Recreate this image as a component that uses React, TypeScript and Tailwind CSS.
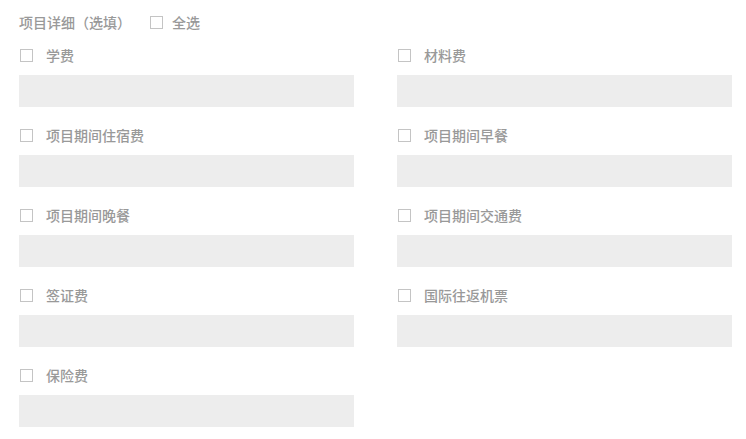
const ITEMS = [
  '学费',
  '材料费',
  '项目期间住宿费',
  '项目期间早餐',
  '项目期间晚餐',
  '项目期间交通费',
  '签证费',
  '国际往返机票',
  '保险费',
];

function Box() {
  return <span className="inline-block w-[13px] h-[13px] border border-[#c4c4c4] bg-white shrink-0" />;
}

export default function App() {
  return (
    <div
      className="bg-white w-[746px] h-[439px] pl-[19px] pr-[14px] pt-[12px] text-[14px] text-[#999999] font-medium"
      style={{ fontFamily: '"Noto Sans CJK SC", "Noto Sans", sans-serif' }}
    >
      {/* Header */}
      <div className="flex items-center h-5">
        <span>项目详细（选填）</span>
        <span className="ml-[19px] flex items-center">
          <Box />
          <span className="ml-[9px]">全选</span>
        </span>
      </div>

      {/* Fields */}
      <div className="grid grid-cols-2 gap-x-[43px] gap-y-[18px] mt-[13px]">
        {ITEMS.map((label) => (
          <div key={label}>
            <div className="flex items-center h-5 pl-px">
              <Box />
              <span className="ml-[13px]">{label}</span>
            </div>
            <div className="mt-[10px] h-[32px] bg-[#ededed]" />
          </div>
        ))}
      </div>
    </div>
  );
}
